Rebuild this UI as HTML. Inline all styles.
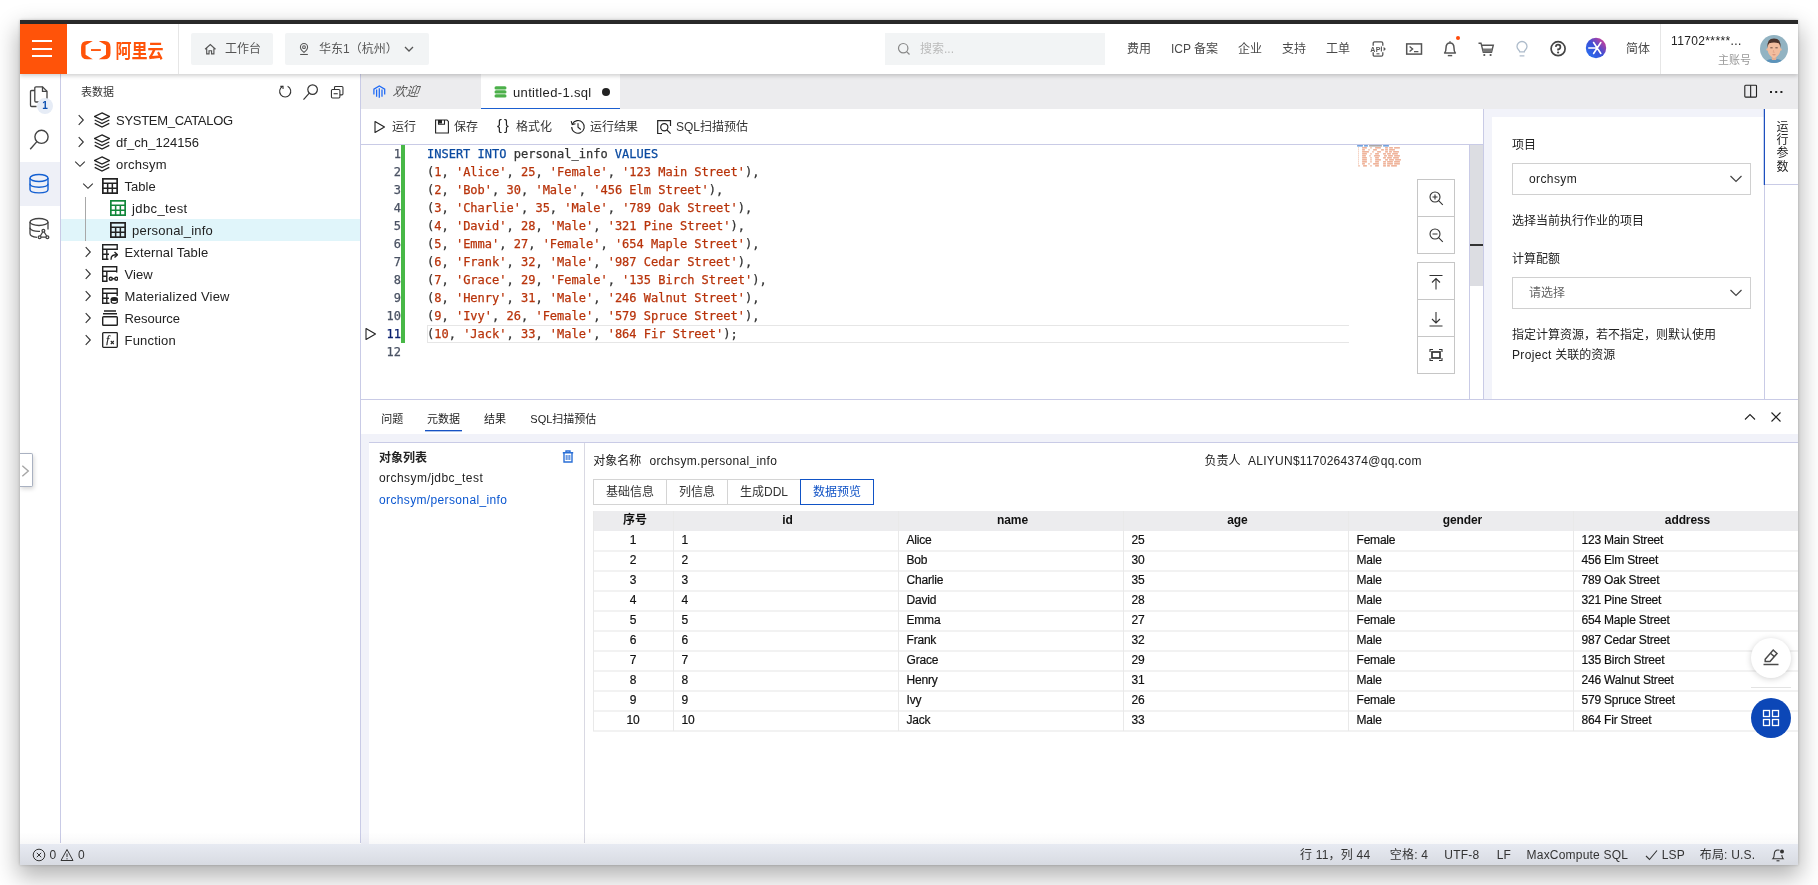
<!DOCTYPE html>
<html lang="zh-CN">
<head>
<meta charset="utf-8">
<title>MaxCompute SQL</title>
<style>
*{box-sizing:border-box;margin:0;padding:0}
html,body{width:1818px;height:885px;overflow:hidden;background:#fff}
body{font-family:"Liberation Sans","Noto Sans CJK SC",sans-serif;font-size:12px;color:#333;position:relative}
.abs{position:absolute}
#win{position:absolute;left:20px;top:20px;width:1778px;height:845px;background:#fff;box-shadow:0 10px 22px 2px rgba(0,0,0,.30),0 0 3px rgba(0,0,0,.22);overflow:hidden;will-change:transform}
#titlebar{left:0;top:0;width:1778px;height:4px;background:#2a2a2a}
/* top nav */
#nav{left:0;top:4px;width:1778px;height:50px;background:#fff;box-shadow:0 2px 4px rgba(0,0,0,.18);z-index:20}
#burger{left:0;top:0;width:47px;height:50px;background:#ff5309}
#burger i{position:absolute;left:12px;width:20px;height:2px;background:#fff}
.navbtn{position:absolute;top:9px;height:32px;background:#f2f4f5;border-radius:2px;color:#555;font-size:12px;line-height:32px}
.navtxt{position:absolute;top:0;height:50px;line-height:50px;font-size:12px;color:#4a4a4a;white-space:nowrap}
/* activity bar */
#act{left:0;top:54px;width:40px;height:769px;background:#fff}
#actline{left:40px;top:54px;width:1px;height:769px;background:#c9cbe6}
/* explorer */
#exp{left:41px;top:54px;width:299px;height:769px;background:#fff}
#expline{left:340px;top:54px;width:1px;height:769px;background:#c9cbe6}
.row{position:absolute;left:0;width:299px;height:22px;line-height:22px;font-size:13px;color:#222;white-space:nowrap}
.row span{position:absolute;top:0}
.row svg{position:absolute}
/* editor area */
#tabs{left:341px;top:54px;width:1437px;height:35px;background:#ececee}
#toolbar{left:341px;top:89px;width:1122px;height:36px;background:#fff;border-bottom:1px solid #c9cbe6}
.tb{position:absolute;top:1px;height:35px;line-height:35px;font-size:12px;color:#333;white-space:nowrap}
#editor{left:341px;top:125px;width:1122px;height:254px;background:#fff}
.ln{position:absolute;left:0;width:40px;text-align:right;height:18px;line-height:18px;font-family:"DejaVu Sans Mono","Liberation Mono",monospace;font-size:12px;color:#4a5263}
.cl{position:absolute;left:66px;height:18px;line-height:18px;font-family:"DejaVu Sans Mono","Liberation Mono",monospace;font-size:12px;color:#333;white-space:pre}
.k{color:#0a4aa0}.s{color:#b8330a}.n{color:#b8330a}
.cl,.ln{-webkit-text-stroke:.25px}
/* right params */
#rp{left:1463px;top:89px;width:281px;height:290px;background:#f2f3fa;border-left:1px solid #c9cbe6}
#rpcard{left:1472px;top:97px;width:272px;height:282px;background:#fff}
#rptab{left:1744px;top:89px;width:34px;height:290px;background:#fff;border-left:1px solid #c9cbe6}
/* bottom panel */
#bp{left:341px;top:379px;width:1437px;height:445px;background:#fff;border-top:1px solid #c9cbe6}
#status{left:0;top:824px;width:1778px;height:21px;background:linear-gradient(#e7eaf2,#d8dbe2);font-size:12px;color:#333;line-height:21px;z-index:40}
#prefade{left:0;top:812px;width:1778px;height:12px;background:linear-gradient(rgba(0,0,0,0),rgba(60,60,80,.035));z-index:39}
#status span{position:absolute;top:1px;white-space:nowrap;letter-spacing:.2px}
.th{height:20px;line-height:19px;font-size:12px;font-weight:bold;color:#111;text-align:center;padding-left:4px;letter-spacing:-.1px}
.td{height:20px;line-height:18px;font-size:12px;color:#111;padding-left:8.500px;white-space:nowrap;letter-spacing:-.2px;-webkit-text-stroke:.2px}
</style>
</head>
<body>
<div id="win">
<div id="titlebar" class="abs"></div>
<!--NAV-->
<div id="nav" class="abs">
 <div id="burger" class="abs"><i style="top:16px"></i><i style="top:24px"></i><i style="top:31px"></i></div>
 <svg class="abs" style="left:56px;top:10px" width="94" height="32" viewBox="0 0 1818 619">
  <g fill="#ff5309">
   <path d="M325,133 L215,133 Q98,133 98,250 L98,370 Q98,487 215,487 L325,487 L185,400 L185,220 Z"/>
   <path d="M440,133 L550,133 Q667,133 667,250 L667,370 Q667,487 550,487 L440,487 L580,400 L580,220 Z"/>
   <rect x="290" y="292" width="190" height="36"/>
   <text x="762" y="470" font-family="'Liberation Sans','Noto Sans CJK SC',sans-serif" font-weight="bold" font-size="365" textLength="930" lengthAdjust="spacingAndGlyphs">阿里云</text>
  </g>
 </svg>
 <div class="abs" style="left:158px;top:0;width:1px;height:50px;background:#e6e6e6"></div>
 <div class="navbtn" style="left:171px;width:82px">
  <svg class="abs" style="left:12.500px;top:10px" width="12.600" height="12.600" viewBox="0 0 14 14" fill="none" stroke="#555" stroke-width="1.3"><path d="M1.2,7 L7,1.8 L12.8,7 M3,6 V12 H5.6 V8.6 H8.4 V12 H11 V6"/></svg>
  <span class="abs" style="left:34px;top:0">工作台</span>
 </div>
 <div class="navbtn" style="left:265px;width:144px">
  <svg class="abs" style="left:13px;top:9px" width="12" height="13.700" viewBox="0 0 14 16" fill="none" stroke="#555" stroke-width="1.25"><path d="M7,12.2 C4,9.6 2.8,7.8 2.8,6 A4.2,4.2 0 0 1 11.200,6 C11.2,7.800 10,9.600 7,12.2 Z"/><circle cx="7" cy="6" r="1.600"/><path d="M2.5,14.600 H11.5"/></svg>
  <span class="abs" style="left:34px;top:0">华东1（杭州）</span>
  <svg class="abs" style="left:119px;top:12px" width="10" height="8" viewBox="0 0 10 8" fill="none" stroke="#555" stroke-width="1.3"><path d="M1,2 L5,6 L9,2"/></svg>
 </div>
 <div class="abs" style="left:865px;top:9px;width:220px;height:32px;background:#f2f4f5">
  <svg class="abs" style="left:12px;top:9px" width="14" height="14" viewBox="0 0 14 14" fill="none" stroke="#888" stroke-width="1.2"><circle cx="6.2" cy="6.2" r="4.700"/><path d="M9.600,9.600 L12.5,12.5"/></svg>
  <span class="abs" style="left:35px;top:0;line-height:32px;color:#bbb;font-size:12px">搜索...</span>
 </div>
 <span class="navtxt" style="left:1107px">费用</span>
 <span class="navtxt" style="left:1151px">ICP 备案</span>
 <span class="navtxt" style="left:1218px">企业</span>
 <span class="navtxt" style="left:1262px">支持</span>
 <span class="navtxt" style="left:1306px">工单</span>
 <!-- API icon -->
 <svg class="abs" style="left:1349px;top:16px" width="18" height="18" viewBox="0 0 18 18" fill="none" stroke="#555" stroke-width="1.300"><path d="M4.200,5.800 V3.300 Q4.200,1.800 5.700,1.800 H12.300 Q13.800,1.800 13.800,3.300 V5.800 M13.800,12.200 V14.700 Q13.800,16.200 12.300,16.200 H5.700 Q4.200,16.200 4.200,14.700 V12.200"/><path d="M7.500,13.800 H10.500" stroke-width="1.100"/><text x="1.300" y="11.600" font-family="'Liberation Sans',sans-serif" font-size="7" font-weight="bold" fill="#555" stroke="none" letter-spacing="0.300">AP</text><path d="M12.400,6.400 V11.600" stroke-width="1.100"/><path d="M14.600,6.800 L16.900,9 L14.600,11.200 Z" fill="#555" stroke="none"/></svg>
 <!-- terminal -->
 <svg class="abs" style="left:1385px;top:18px" width="18" height="14" viewBox="0 0 18 14" fill="none" stroke="#555" stroke-width="1.500"><rect x="1.700" y="1.900" width="14.800" height="10.200"/><path d="M4.600,4.500 L7.600,7 L4.600,9.500 M9,9.600 H13.400" stroke-width="1.400"/></svg>
 <!-- bell -->
 <svg class="abs" style="left:1421px;top:16px" width="18" height="18" viewBox="0 0 18 18" fill="none" stroke="#555" stroke-width="1.500"><path d="M9,1.200 V2.800"/><path d="M3.600,13 H14.400 C13.200,11.800 13,10.500 13,8 C13,4.700 11.300,3 9,3 C6.700,3 5,4.700 5,8 C5,10.500 4.800,11.800 3.600,13 Z" stroke-linejoin="round"/><path d="M6.800,15.600 H11.200" stroke-width="1.400"/></svg>
 <div class="abs" style="left:1436px;top:12px;width:4px;height:4px;border-radius:50%;background:#ff4a0a"></div>
 <!-- cart -->
 <svg class="abs" style="left:1457px;top:17px" width="18" height="16" viewBox="0 0 18 16" fill="none" stroke="#555" stroke-width="1.400"><path d="M1.500,2.200 H4 L6.300,11.300 H14.500 L16.300,4.200 H4.600"/><path d="M5.700,7.600 H15.300 L14.500,11.300 H6.500 Z" fill="#777" stroke="none"/><circle cx="7.300" cy="14" r="1.100" fill="#555" stroke="none"/><circle cx="13.600" cy="14" r="1.100" fill="#555" stroke="none"/></svg>
 <!-- bulb -->
 <svg class="abs" style="left:1493px;top:16px" width="18" height="18" viewBox="0 0 18 18" fill="none" stroke="#aebccb" stroke-width="1.300"><path d="M6.700,11.800 C6.700,10.300 4,9.400 4,6.500 A5,5 0 0 1 14,6.500 C14,9.400 11.300,10.300 11.300,11.800 Z M6.600,15.800 H11.400"/></svg>
 <!-- help -->
 <svg class="abs" style="left:1528px;top:15px" width="20" height="20" viewBox="0 0 20 20" fill="none" stroke="#444" stroke-width="1.700"><circle cx="10.100" cy="9.700" r="7"/><path d="M7.800,7.900 A2.300,2.300 0 1 1 10.100,10.300 V11.400" stroke-width="1.700"/><circle cx="10.100" cy="13.500" r="1.100" fill="#444" stroke="none"/></svg>
 <!-- colorful -->
 <svg class="abs" style="left:1565px;top:13px" width="22" height="22" viewBox="0 0 22 22"><defs><linearGradient id="gcol" x1="0.100" y1="0.900" x2="0.900" y2="0.100"><stop offset="0" stop-color="#2a6ff0"/><stop offset=".5" stop-color="#3b4fd6"/><stop offset="1" stop-color="#d03c96"/></linearGradient></defs><circle cx="11" cy="11" r="10.200" fill="url(#gcol)"/><g stroke="#fff" stroke-width="1.600" stroke-linecap="round" fill="none"><path d="M3.800,11 H12 M8.600,5.500 L15.800,16.500 M15.800,5.500 L8.600,16.500"/></g></svg>
 <span class="navtxt" style="left:1606px">简体</span>
 <div class="abs" style="left:1640px;top:0;width:1px;height:50px;background:#e6e6e6"></div>
 <span class="abs" style="left:1651px;top:9px;font-size:12px;color:#222;line-height:16px;letter-spacing:.37px">11702*****...</span>
 <span class="abs" style="left:1698px;top:28.500px;font-size:11px;color:#999;line-height:15px">主账号</span>
 <!-- avatar -->
 <svg class="abs" style="left:1740px;top:11px" width="28" height="28" viewBox="0 0 28 28"><defs><clipPath id="avc"><circle cx="14" cy="14" r="14"/></clipPath></defs><g clip-path="url(#avc)"><rect width="28" height="28" fill="#92b3c2"/><path d="M5,28 Q6,24.500 11,24 L17,24 Q22,24.500 23,28 Z" fill="#5c93ba"/><rect x="11.800" y="20" width="4.400" height="5" fill="#e3ae92"/><circle cx="7.600" cy="14.500" r="1.300" fill="#eeb798"/><circle cx="20.400" cy="14.500" r="1.300" fill="#eeb798"/><path d="M7.600,12 Q7.600,5 14,5 Q20.400,5 20.400,12 L20.200,16 Q19.800,20.500 14,23.300 Q8.200,20.500 7.800,16 Z" fill="#f2bd9e"/><path d="M7.500,13 Q6.600,3.600 14,3.600 Q21.400,3.600 20.500,13 Q20,9.500 18.800,8.200 Q14,7 9.200,8.200 Q8,9.500 7.500,13 Z" fill="#4a332b"/><path d="M10.300,12.800 H12.600 M15.400,12.800 H17.700" stroke="#4a332b" stroke-width=".8" fill="none"/><path d="M13.600,15 L13.300,17.300 H14.700" stroke="#d99a80" stroke-width=".6" fill="none"/><path d="M12.600,19.600 Q14,20.200 15.400,19.600" stroke="#c0705f" stroke-width=".7" fill="none"/></g></svg>
</div>
<!--/NAV-->
<!--ACT-->
<svg width="0" height="0" style="position:absolute"><defs>
<symbol id="chevR" viewBox="0 0 16 16"><path d="M5.700,3.200 L10.300,8 L5.700,12.800" fill="none" stroke="#333" stroke-width="1.100"/></symbol>
<symbol id="chevD" viewBox="0 0 16 16"><path d="M3.200,5.700 L8,10.300 L12.800,5.700" fill="none" stroke="#333" stroke-width="1.100"/></symbol>
<symbol id="layers" viewBox="0 0 16 16"><g fill="none" stroke="#222" stroke-width="1.300" stroke-linejoin="miter"><path d="M8,0.900 L15.300,4.500 L8,8.100 L0.700,4.500 Z"/><path d="M0.700,8 L8,11.600 L15.300,8"/><path d="M0.700,11.400 L8,15 L15.300,11.400"/></g></symbol>
<symbol id="tbl" viewBox="0 0 16 16"><g fill="none" stroke="currentColor"><rect x="0.850" y="0.850" width="14.300" height="14.300" stroke-width="1.700"/><path d="M0.800,5.300 H15.200 M0.800,10.200 H15.200 M5.650,5.300 V15.200 M10.350,5.300 V15.200" stroke-width="1.500"/></g></symbol>
<symbol id="ext" viewBox="0 0 16 16"><g fill="none" stroke="#222" stroke-width="1.400"><path d="M15.200,6 V0.700 H0.700 V15.300 H6.500"/><path d="M0.700,5.300 H15.200 M0.700,10.300 H7 M4.800,5.300 V15.300"/><path d="M9,15.800 C9,11.500 11,10.800 15,10.800"/><path d="M12.500,8 L15.500,10.800 L12.500,13.600" /></g></symbol>
<symbol id="view" viewBox="0 0 16 16"><g fill="none" stroke="#222" stroke-width="1.400"><path d="M14.700,6.500 V0.700 H0.700 V15.300 H5.500"/><path d="M0.700,5.300 H14.700 M0.700,10.300 H5.500 M4.800,5.300 V15.300"/><circle cx="8.800" cy="12.700" r="1.500"/><circle cx="14.300" cy="12.700" r="1.500"/><path d="M10.300,12.700 H12.800"/></g></symbol>
<symbol id="mview" viewBox="0 0 16 16"><g fill="none" stroke="#222" stroke-width="1.400"><path d="M15.200,8 V0.700 H0.700 V15.300 H7.500"/><path d="M0.700,5.300 H15.200 M0.700,10.300 H7 M4.800,5.300 V15.300"/><ellipse cx="12.300" cy="11" rx="3" ry="1.400" fill="#222"/><path d="M9.300,11 V13.800 C9.300,15.800 15.300,15.800 15.300,13.800 V11" stroke-width="1.300"/></g></symbol>
<symbol id="res" viewBox="0 0 16 16"><g fill="none" stroke="#222" stroke-width="1.400"><path d="M2,1 H14 M1,3.800 H15"/><rect x="0.700" y="6.700" width="14.600" height="8.600" rx="0.800"/></g></symbol>
<symbol id="fn" viewBox="0 0 16 16"><rect x="0.700" y="0.700" width="14.600" height="14.600" rx="0.800" fill="none" stroke="#222" stroke-width="1.300"/><text x="4.200" y="11" font-family="'Liberation Serif',serif" font-style="italic" font-size="10.500" fill="#222" stroke="#222" stroke-width=".25">f</text><path d="M8.800,9 L11.800,12 M11.800,9 L8.800,12" stroke="#222" stroke-width="1.100" fill="none"/></symbol>
</defs></svg>
<div id="act" class="abs">
 <div class="abs" style="left:0;top:88px;width:40px;height:44px;background:#eef0f7"></div>
 <svg class="abs" style="left:8px;top:11px" width="24" height="24" viewBox="0 0 24 24" fill="none" stroke="#444" stroke-width="1.300"><path d="M6.800,5.500 V3 Q6.800,1.800 8,1.800 H14.500 L19,6.300 V15.800 Q19,17 17.800,17 H8 Q6.800,17 6.800,15.800 V5.500 H3.700 Q2.500,5.500 2.500,6.700 V20.300 Q2.500,21.500 3.700,21.500 H8.500"/><path d="M14.500,1.800 V6.300 H19"/></svg>
 <div class="abs" style="left:17px;top:24px;width:16px;height:16px;border-radius:50%;background:#e6ecf6;color:#0b4fb0;font-size:10px;font-weight:bold;line-height:16px;text-align:center">1</div>
 <svg class="abs" style="left:8px;top:53px" width="24" height="24" viewBox="0 0 24 24" fill="none" stroke="#444" stroke-width="1.400"><circle cx="13.500" cy="9.800" r="6.600"/><path d="M8.900,14.600 L2.200,22.200"/></svg>
 <svg class="abs" style="left:7.800px;top:98.600px" width="22" height="22" viewBox="0 0 22 22" fill="none" stroke="#1460d2" stroke-width="1.400"><ellipse cx="11" cy="5" rx="9" ry="3.500"/><path d="M2,5 V16.500 C2,21 20,21 20,16.500 V5"/><path d="M2,10.800 C2,15.300 20,15.300 20,10.800"/></svg>
 <svg class="abs" style="left:7.800px;top:142.600px" width="22" height="23" viewBox="0 0 22 23" fill="none" stroke="#444" stroke-width="1.300"><ellipse cx="11" cy="5" rx="9" ry="3.500"/><path d="M2,5 V16.500 C2,19 5.500,20 9,20.300 M20,5 V12.500"/><path d="M2,10.800 C2,13.500 7,14.600 12,14.300"/><circle cx="15.400" cy="13.800" r="1.400"/><circle cx="11.600" cy="20.200" r="1.400"/><circle cx="19.400" cy="20.200" r="1.400"/><path d="M14.700,15 L12.300,19 M16.100,15 L18.700,19 M13,20.200 H18"/></svg>
</div>
<div id="actline" class="abs"></div>
<div id="exp" class="abs">
<span class="abs" style="left:20px;top:1px;line-height:35px;font-size:11px;color:#333">表数据</span>
<svg class="abs" style="left:217px;top:10px" width="14.400" height="14.400" viewBox="0 0 16 16" fill="none" stroke="#333" stroke-width="1.200"><path d="M5.300,2.600 A6.200,6.200 0 1 0 10.700,2.600"/><path d="M2.600,2.600 H5.600 V5.600" /></svg>
<svg class="abs" style="left:241px;top:9px" width="18" height="18" viewBox="0 0 18 18" fill="none" stroke="#333" stroke-width="1.200"><circle cx="10.600" cy="6.600" r="4.800"/><path d="M7.300,10.100 L1.500,16.600"/></svg>
<svg class="abs" style="left:269px;top:10.500px" width="14.400" height="14.400" viewBox="0 0 16 16" fill="none" stroke="#333" stroke-width="1.200"><rect x="1.600" y="5" width="9.400" height="9.400" rx="1.200"/><path d="M5,5 V2.800 Q5,1.600 6.200,1.600 H13.200 Q14.400,1.600 14.400,2.800 V9.800 Q14.400,11 13.200,11 H11"/><path d="M4,9.700 H8.600"/></svg>
<div class="row" style="top:35px">
<svg style="left:11.5px;top:3px" width="16" height="16"><use href="#chevR"/></svg>
<svg style="left:33px;top:3px;color:#222" width="16" height="16"><use href="#layers"/></svg>
<span style="left:55px;top:1px;letter-spacing:-0.29px">SYSTEM_CATALOG</span></div>
<div class="row" style="top:57px">
<svg style="left:11.5px;top:3px" width="16" height="16"><use href="#chevR"/></svg>
<svg style="left:33px;top:3px;color:#222" width="16" height="16"><use href="#layers"/></svg>
<span style="left:55px;top:1px;letter-spacing:0.06px">df_ch_124156</span></div>
<div class="row" style="top:79px">
<svg style="left:11.0px;top:3px" width="16" height="16"><use href="#chevD"/></svg>
<svg style="left:33px;top:3px;color:#222" width="16" height="16"><use href="#layers"/></svg>
<span style="left:55px;top:1px;letter-spacing:0.25px">orchsym</span></div>
<div class="row" style="top:101px">
<svg style="left:18.5px;top:3px" width="16" height="16"><use href="#chevD"/></svg>
<svg style="left:41px;top:3px;color:#222" width="16" height="16"><use href="#tbl"/></svg>
<span style="left:63.5px;top:1px;letter-spacing:0.02px">Table</span></div>
<div class="row" style="top:123px">
<svg style="left:49px;top:3px;color:#12873a" width="16" height="16"><use href="#tbl"/></svg>
<span style="left:71px;top:1px;letter-spacing:0.39px">jdbc_test</span></div>
<div class="row" style="top:145px;background:#e0f5fa">
<svg style="left:49px;top:3px;color:#222" width="16" height="16"><use href="#tbl"/></svg>
<span style="left:71px;top:1px;letter-spacing:0.23px">personal_info</span></div>
<div class="row" style="top:167px">
<svg style="left:19.0px;top:3px" width="16" height="16"><use href="#chevR"/></svg>
<svg style="left:41px;top:3px;color:#222" width="16" height="16"><use href="#ext"/></svg>
<span style="left:63.5px;top:1px;letter-spacing:0.12px">External Table</span></div>
<div class="row" style="top:189px">
<svg style="left:19.0px;top:3px" width="16" height="16"><use href="#chevR"/></svg>
<svg style="left:41px;top:3px;color:#222" width="16" height="16"><use href="#view"/></svg>
<span style="left:63.5px;top:1px;letter-spacing:0.04px">View</span></div>
<div class="row" style="top:211px">
<svg style="left:19.0px;top:3px" width="16" height="16"><use href="#chevR"/></svg>
<svg style="left:41px;top:3px;color:#222" width="16" height="16"><use href="#mview"/></svg>
<span style="left:63.5px;top:1px;letter-spacing:0.21px">Materialized View</span></div>
<div class="row" style="top:233px">
<svg style="left:19.0px;top:3px" width="16" height="16"><use href="#chevR"/></svg>
<svg style="left:41px;top:3px;color:#222" width="16" height="16"><use href="#res"/></svg>
<span style="left:63.5px;top:1px;letter-spacing:-0.03px">Resource</span></div>
<div class="row" style="top:255px">
<svg style="left:19.0px;top:3px" width="16" height="16"><use href="#chevR"/></svg>
<svg style="left:41px;top:3px;color:#222" width="16" height="16"><use href="#fn"/></svg>
<span style="left:63.5px;top:1px;letter-spacing:0.2px">Function</span></div>
<div class="abs" style="left:24px;top:123px;width:1px;height:44px;background:#a8a8a8"></div>
</div><div id="expline" class="abs"></div>
<div class="abs" style="left:0;top:433px;width:13px;height:34px;background:#fff;border:1px solid #a9b1c1;border-left:none;border-radius:0 2px 2px 0;box-shadow:1px 2px 4px rgba(0,0,0,.16);z-index:5"><svg class="abs" style="left:0;top:10px" width="12" height="14" viewBox="0 0 12 14" fill="none" stroke="#a6a6a6" stroke-width="1.400"><path d="M2.300,1.700 L8.300,7 L2.300,12.300"/></svg></div>
<!--/ACT-->
<!--EXP-->
<!--TABS-->
<div id="tabs" class="abs">
<div class="abs" style="left:120px;top:0;width:139px;height:35px;background:#fff;border-bottom:1px solid #1b5fd0"></div>
<svg class="abs" style="left:12px;top:10.500px" width="12.600" height="13.500" viewBox="0 0 14 15" fill="none" stroke="#1f6af5" stroke-width="1.400"><path d="M1,10.500 V4.600 L7,1 L13,4.600 V10.500"/><path d="M4,13 V5 M7,14.300 V3.600 M10,13 V5"/></svg>
<span class="abs" style="left:32px;top:0;line-height:36px;font-size:13px;font-style:italic;color:#5a5a5a;transform:skewX(-6deg)">欢迎</span>
<svg class="abs" style="left:133px;top:12px" width="13" height="12" viewBox="0 0 13 12" fill="#4cb04a"><rect x="0.500" y="0.300" width="12" height="3.300" rx="1.600"/><rect x="0.500" y="4.300" width="12" height="3.300" rx="1.600"/><rect x="0.500" y="8.300" width="12" height="3.300" rx="1.600"/></svg>
<span class="abs" style="left:152px;top:0;line-height:37px;font-size:13px;color:#222;letter-spacing:.35px">untitled-1.sql</span>
<div class="abs" style="left:241px;top:14px;width:8px;height:8px;border-radius:50%;background:#222"></div>
<svg class="abs" style="left:1383px;top:10px" width="14" height="14" viewBox="0 0 14 14" fill="none" stroke="#222" stroke-width="1.100"><rect x="0.800" y="1.300" width="11.700" height="11.800" rx="0.800"/><path d="M6.650,1.300 V13.100"/></svg>
<div class="abs" style="left:1409px;top:17px;width:2px;height:2px;background:#222;box-shadow:5.200px 0 0 #222,10.400px 0 0 #222"></div>
</div>
<div id="toolbar" class="abs">
<svg class="abs" style="left:12px;top:11px" width="13" height="14" viewBox="0 0 13 14" fill="none" stroke="#222" stroke-width="1.100" stroke-linejoin="round"><path d="M2,1.500 L11.500,7 L2,12.500 Z"/></svg>
<span class="tb" style="left:31px">运行</span>
<svg class="abs" style="left:73px;top:10px" width="16" height="15" viewBox="0 0 16 15" fill="none" stroke="#222" stroke-width="1.100"><path d="M1.600,1 H13 L14.400,2.400 V14 H1.600 Z"/><path d="M4.500,1 V5.200 H10.500 V1" /><rect x="5" y="1" width="3" height="3.500" fill="#222" stroke="none"/></svg>
<span class="tb" style="left:93px">保存</span>
<span class="tb" style="left:136px;font-size:14.500px;letter-spacing:2.200px;top:-1px;color:#222">{}</span>
<span class="tb" style="left:155px">格式化</span>
<svg class="abs" style="left:209px;top:10px" width="16" height="16" viewBox="0 0 16 16" fill="none" stroke="#222" stroke-width="1.100"><path d="M2.300,5.200 A6.300,6.300 0 1 1 1.700,8"/><path d="M1.200,2.200 L2.200,5.500 L5.500,4.800"/><path d="M8,4.300 V8.300 L10.800,10.500"/></svg>
<span class="tb" style="left:229px">运行结果</span>
<svg class="abs" style="left:295px;top:10px" width="16" height="16" viewBox="0 0 16 16" fill="none" stroke="#222" stroke-width="1.200"><path d="M14.500,7 V1.700 H1.700 V14.500 H6"/><circle cx="8.300" cy="8.300" r="3.600"/><path d="M10.900,10.900 L14.600,14.600"/></svg>
<span class="tb" style="left:315px">SQL扫描预估</span>
</div>
<div id="editor" class="abs">
<div class="abs" style="left:40px;top:0;width:4px;height:198px;background:#48b847"></div>
<div class="abs" style="left:66px;top:180px;width:922px;height:18px;border:1px solid #e6e6e6;border-right:none"></div>
<svg class="abs" style="left:3px;top:182px" width="13" height="14" viewBox="0 0 13 14" fill="none" stroke="#222" stroke-width="1.100" stroke-linejoin="round"><path d="M2,1.500 L11.500,7 L2,12.500 Z"/></svg>
<div class="ln" style="top:0px">1</div>
<div class="cl" style="top:0px"><span class=k>INSERT INTO</span> personal_info <span class=k>VALUES</span></div>
<div class="ln" style="top:18px">2</div>
<div class="cl" style="top:18px">(<span class=n>1</span>, <span class=s>'Alice'</span>, <span class=n>25</span>, <span class=s>'Female'</span>, <span class=s>'123 Main Street'</span>),</div>
<div class="ln" style="top:36px">3</div>
<div class="cl" style="top:36px">(<span class=n>2</span>, <span class=s>'Bob'</span>, <span class=n>30</span>, <span class=s>'Male'</span>, <span class=s>'456 Elm Street'</span>),</div>
<div class="ln" style="top:54px">4</div>
<div class="cl" style="top:54px">(<span class=n>3</span>, <span class=s>'Charlie'</span>, <span class=n>35</span>, <span class=s>'Male'</span>, <span class=s>'789 Oak Street'</span>),</div>
<div class="ln" style="top:72px">5</div>
<div class="cl" style="top:72px">(<span class=n>4</span>, <span class=s>'David'</span>, <span class=n>28</span>, <span class=s>'Male'</span>, <span class=s>'321 Pine Street'</span>),</div>
<div class="ln" style="top:90px">6</div>
<div class="cl" style="top:90px">(<span class=n>5</span>, <span class=s>'Emma'</span>, <span class=n>27</span>, <span class=s>'Female'</span>, <span class=s>'654 Maple Street'</span>),</div>
<div class="ln" style="top:108px">7</div>
<div class="cl" style="top:108px">(<span class=n>6</span>, <span class=s>'Frank'</span>, <span class=n>32</span>, <span class=s>'Male'</span>, <span class=s>'987 Cedar Street'</span>),</div>
<div class="ln" style="top:126px">8</div>
<div class="cl" style="top:126px">(<span class=n>7</span>, <span class=s>'Grace'</span>, <span class=n>29</span>, <span class=s>'Female'</span>, <span class=s>'135 Birch Street'</span>),</div>
<div class="ln" style="top:144px">9</div>
<div class="cl" style="top:144px">(<span class=n>8</span>, <span class=s>'Henry'</span>, <span class=n>31</span>, <span class=s>'Male'</span>, <span class=s>'246 Walnut Street'</span>),</div>
<div class="ln" style="top:162px">10</div>
<div class="cl" style="top:162px">(<span class=n>9</span>, <span class=s>'Ivy'</span>, <span class=n>26</span>, <span class=s>'Female'</span>, <span class=s>'579 Spruce Street'</span>),</div>
<div class="ln" style="top:180px;color:#0b216f">11</div>
<div class="cl" style="top:180px">(<span class=n>10</span>, <span class=s>'Jack'</span>, <span class=n>33</span>, <span class=s>'Male'</span>, <span class=s>'864 Fir Street'</span>);</div>
<div class="ln" style="top:198px">12</div>
<svg class="abs" style="left:996px;top:0" width="48" height="24" viewBox="0 0 48 24"><rect x="0.1" y="0.2" width="5.8" height="1.3" fill="#3f7fd0" opacity="0.9"/><rect x="7.1" y="0.2" width="3.8" height="1.3" fill="#3f7fd0" opacity="0.9"/><rect x="12.1" y="0.2" width="12.8" height="1.3" fill="#8a8a8a" opacity="0.9"/><rect x="26.1" y="0.2" width="5.8" height="1.3" fill="#3f7fd0" opacity="0.9"/><rect x="1.1" y="2.2" width="0.8" height="1.3" fill="#e8926d" opacity="0.6"/><rect x="5.1" y="2.2" width="4.8" height="1.3" fill="#e8926d" opacity="0.85"/><rect x="13.1" y="2.2" width="1.8" height="1.3" fill="#e8926d" opacity="0.6"/><rect x="18.1" y="2.2" width="5.8" height="1.3" fill="#e8926d" opacity="0.85"/><rect x="28.1" y="2.2" width="2.8" height="1.3" fill="#e8926d" opacity="0.85"/><rect x="32.1" y="2.2" width="3.8" height="1.3" fill="#e8926d" opacity="0.85"/><rect x="37.1" y="2.2" width="5.8" height="1.3" fill="#e8926d" opacity="0.85"/><rect x="1.1" y="4.2" width="0.8" height="1.3" fill="#e8926d" opacity="0.6"/><rect x="5.1" y="4.2" width="2.8" height="1.3" fill="#e8926d" opacity="0.85"/><rect x="11.1" y="4.2" width="1.8" height="1.3" fill="#e8926d" opacity="0.6"/><rect x="16.1" y="4.2" width="3.8" height="1.3" fill="#e8926d" opacity="0.85"/><rect x="24.1" y="4.2" width="2.8" height="1.3" fill="#e8926d" opacity="0.85"/><rect x="28.1" y="4.2" width="2.8" height="1.3" fill="#e8926d" opacity="0.85"/><rect x="32.1" y="4.2" width="5.8" height="1.3" fill="#e8926d" opacity="0.85"/><rect x="1.1" y="6.2" width="0.8" height="1.3" fill="#e8926d" opacity="0.6"/><rect x="5.1" y="6.2" width="6.8" height="1.3" fill="#e8926d" opacity="0.85"/><rect x="15.1" y="6.2" width="1.8" height="1.3" fill="#e8926d" opacity="0.6"/><rect x="20.1" y="6.2" width="3.8" height="1.3" fill="#e8926d" opacity="0.85"/><rect x="28.1" y="6.2" width="2.8" height="1.3" fill="#e8926d" opacity="0.85"/><rect x="32.1" y="6.2" width="2.8" height="1.3" fill="#e8926d" opacity="0.85"/><rect x="36.1" y="6.2" width="5.8" height="1.3" fill="#e8926d" opacity="0.85"/><rect x="1.1" y="8.2" width="0.8" height="1.3" fill="#e8926d" opacity="0.6"/><rect x="5.1" y="8.2" width="4.8" height="1.3" fill="#e8926d" opacity="0.85"/><rect x="13.1" y="8.2" width="1.8" height="1.3" fill="#e8926d" opacity="0.6"/><rect x="18.1" y="8.2" width="3.8" height="1.3" fill="#e8926d" opacity="0.85"/><rect x="26.1" y="8.2" width="2.8" height="1.3" fill="#e8926d" opacity="0.85"/><rect x="30.1" y="8.2" width="3.8" height="1.3" fill="#e8926d" opacity="0.85"/><rect x="35.1" y="8.2" width="5.8" height="1.3" fill="#e8926d" opacity="0.85"/><rect x="1.1" y="10.2" width="0.8" height="1.3" fill="#e8926d" opacity="0.6"/><rect x="5.1" y="10.2" width="3.8" height="1.3" fill="#e8926d" opacity="0.85"/><rect x="12.1" y="10.2" width="1.8" height="1.3" fill="#e8926d" opacity="0.6"/><rect x="17.1" y="10.2" width="5.8" height="1.3" fill="#e8926d" opacity="0.85"/><rect x="27.1" y="10.2" width="2.8" height="1.3" fill="#e8926d" opacity="0.85"/><rect x="31.1" y="10.2" width="4.8" height="1.3" fill="#e8926d" opacity="0.85"/><rect x="37.1" y="10.2" width="5.8" height="1.3" fill="#e8926d" opacity="0.85"/><rect x="1.1" y="12.2" width="0.8" height="1.3" fill="#e8926d" opacity="0.6"/><rect x="5.1" y="12.2" width="4.8" height="1.3" fill="#e8926d" opacity="0.85"/><rect x="13.1" y="12.2" width="1.8" height="1.3" fill="#e8926d" opacity="0.6"/><rect x="18.1" y="12.2" width="3.8" height="1.3" fill="#e8926d" opacity="0.85"/><rect x="26.1" y="12.2" width="2.8" height="1.3" fill="#e8926d" opacity="0.85"/><rect x="30.1" y="12.2" width="4.8" height="1.3" fill="#e8926d" opacity="0.85"/><rect x="36.1" y="12.2" width="5.8" height="1.3" fill="#e8926d" opacity="0.85"/><rect x="1.1" y="14.2" width="0.8" height="1.3" fill="#e8926d" opacity="0.6"/><rect x="5.1" y="14.2" width="4.8" height="1.3" fill="#e8926d" opacity="0.85"/><rect x="13.1" y="14.2" width="1.8" height="1.3" fill="#e8926d" opacity="0.6"/><rect x="18.1" y="14.2" width="5.8" height="1.3" fill="#e8926d" opacity="0.85"/><rect x="28.1" y="14.2" width="2.8" height="1.3" fill="#e8926d" opacity="0.85"/><rect x="32.1" y="14.2" width="4.8" height="1.3" fill="#e8926d" opacity="0.85"/><rect x="38.1" y="14.2" width="5.8" height="1.3" fill="#e8926d" opacity="0.85"/><rect x="1.1" y="16.2" width="0.8" height="1.3" fill="#e8926d" opacity="0.6"/><rect x="5.1" y="16.2" width="4.8" height="1.3" fill="#e8926d" opacity="0.85"/><rect x="13.1" y="16.2" width="1.8" height="1.3" fill="#e8926d" opacity="0.6"/><rect x="18.1" y="16.2" width="3.8" height="1.3" fill="#e8926d" opacity="0.85"/><rect x="26.1" y="16.2" width="2.8" height="1.3" fill="#e8926d" opacity="0.85"/><rect x="30.1" y="16.2" width="5.8" height="1.3" fill="#e8926d" opacity="0.85"/><rect x="37.1" y="16.2" width="5.8" height="1.3" fill="#e8926d" opacity="0.85"/><rect x="1.1" y="18.2" width="0.8" height="1.3" fill="#e8926d" opacity="0.6"/><rect x="5.1" y="18.2" width="2.8" height="1.3" fill="#e8926d" opacity="0.85"/><rect x="11.1" y="18.2" width="1.8" height="1.3" fill="#e8926d" opacity="0.6"/><rect x="16.1" y="18.2" width="5.8" height="1.3" fill="#e8926d" opacity="0.85"/><rect x="26.1" y="18.2" width="2.8" height="1.3" fill="#e8926d" opacity="0.85"/><rect x="30.1" y="18.2" width="5.8" height="1.3" fill="#e8926d" opacity="0.85"/><rect x="37.1" y="18.2" width="5.8" height="1.3" fill="#e8926d" opacity="0.85"/><rect x="1.1" y="20.2" width="1.8" height="1.3" fill="#e8926d" opacity="0.6"/><rect x="6.1" y="20.2" width="3.8" height="1.3" fill="#e8926d" opacity="0.85"/><rect x="13.1" y="20.2" width="1.8" height="1.3" fill="#e8926d" opacity="0.6"/><rect x="18.1" y="20.2" width="3.8" height="1.3" fill="#e8926d" opacity="0.85"/><rect x="26.1" y="20.2" width="2.8" height="1.3" fill="#e8926d" opacity="0.85"/><rect x="30.1" y="20.2" width="2.8" height="1.3" fill="#e8926d" opacity="0.85"/><rect x="34.1" y="20.2" width="5.8" height="1.3" fill="#e8926d" opacity="0.85"/></svg>
<div class="abs" style="left:1056px;top:34px;width:38px;height:75px;border:1px solid #c6c6c6;background:#fff"></div><div class="abs" style="left:1056px;top:71px;width:38px;height:1px;background:#c6c6c6"></div>
<div class="abs" style="left:1056px;top:117px;width:38px;height:112px;border:1px solid #c6c6c6;background:#fff"></div><div class="abs" style="left:1056px;top:154px;width:38px;height:1px;background:#c6c6c6"></div><div class="abs" style="left:1056px;top:191px;width:38px;height:1px;background:#c6c6c6"></div>
<svg class="abs" style="left:1067px;top:45px" width="16" height="16" viewBox="0 0 16 16" fill="none" stroke="#333" stroke-width="1.100"><circle cx="7" cy="7" r="5"/><path d="M10.600,10.600 L14.800,14.800 M4.500,7 H9.500 M7,4.500 V9.500"/></svg>
<svg class="abs" style="left:1067px;top:82px" width="16" height="16" viewBox="0 0 16 16" fill="none" stroke="#333" stroke-width="1.100"><circle cx="7" cy="7" r="5"/><path d="M10.600,10.600 L14.800,14.800 M4.500,7 H9.500"/></svg>
<svg class="abs" style="left:1067px;top:129px" width="16" height="16" viewBox="0 0 16 16" fill="none" stroke="#333" stroke-width="1.100"><path d="M1.500,1.500 H14.500 M8,15.500 V4.500 M4,8.500 L8,4.500 L12,8.500"/></svg>
<svg class="abs" style="left:1067px;top:166px" width="16" height="16" viewBox="0 0 16 16" fill="none" stroke="#333" stroke-width="1.100"><path d="M1.500,15 H14.500 M8,1 V12 M4,8 L8,12 L12,8"/></svg>
<svg class="abs" style="left:1067px;top:202px" width="16" height="16" viewBox="0 0 16 16" fill="none" stroke="#333" stroke-width="1.100"><path d="M2,5 V2.500 H5 M11,2.500 H14 V5 M14,11 V13.500 H11 M5,13.500 H2 V11" /><rect x="4" y="5" width="8" height="6" stroke-width="1.700"/></svg>
<div class="abs" style="left:1108px;top:0;width:1px;height:254px;background:#c9cbe6"></div>
<div class="abs" style="left:1109px;top:0;width:13px;height:141px;background:#dcdde2"></div>
<div class="abs" style="left:1109px;top:99px;width:13px;height:2px;background:#333"></div>
</div>
<!--/TABS-->
<!--EDITOR-->
<!--RP-->
<div id="rp" class="abs"></div><div id="rpcard" class="abs">
<span class="abs" style="left:20px;top:19px;line-height:18px;font-size:12px;color:#222">项目</span>
<div class="abs" style="left:20px;top:46px;width:239px;height:32px;border:1px solid #d0d0d0;background:#fff"><span class="abs" style="left:16px;top:0;line-height:31px;font-size:12px;color:#222;letter-spacing:.4px">orchsym</span><svg class="abs" style="left:216px;top:10px" width="14" height="10" viewBox="0 0 14 10" fill="none" stroke="#444" stroke-width="1.200"><path d="M1.500,2 L7,7.500 L12.500,2"/></svg></div>
<span class="abs" style="left:20px;top:95px;line-height:18px;font-size:12px;color:#222">选择当前执行作业的项目</span>
<span class="abs" style="left:20px;top:132.5px;line-height:18px;font-size:12px;color:#222">计算配额</span>
<div class="abs" style="left:20px;top:160px;width:239px;height:32px;border:1px solid #d0d0d0;background:#fff"><span class="abs" style="left:16px;top:0;line-height:31px;font-size:12px;color:#666">请选择</span><svg class="abs" style="left:216px;top:10px" width="14" height="10" viewBox="0 0 14 10" fill="none" stroke="#444" stroke-width="1.200"><path d="M1.500,2 L7,7.500 L12.500,2"/></svg></div>
<span class="abs" style="left:20px;top:208px;line-height:20px;font-size:12px;color:#222;width:240px;white-space:nowrap">指定计算资源，若不指定，则默认使用<br><span style="letter-spacing:.35px">Project</span> 关联的资源</span>
</div>
<div id="rptab" class="abs"><div class="abs" style="left:-1px;top:0;width:1px;height:76px;background:#1d4fbf;box-shadow:-1px 0 0 rgba(29,79,191,.25)"></div><div class="abs" style="left:0;top:75px;width:35px;height:1px;background:#c9cbe6"></div>
<div class="abs" style="left:9px;top:11.400px;width:13px;height:60px;font-size:12px;line-height:13px;letter-spacing:1.450px;color:#222;writing-mode:vertical-rl;white-space:nowrap">运行参数</div></div>
<!--/RP-->
<!--BP-->
<div id="bp" class="abs">
<span class="abs" style="left:20.3px;top:9px;line-height:20px;font-size:11px;color:#222;white-space:nowrap">问题</span>
<span class="abs" style="left:66.0px;top:9px;line-height:20px;font-size:11px;color:#222;white-space:nowrap">元数据</span>
<span class="abs" style="left:123.0px;top:9px;line-height:20px;font-size:11px;color:#222;white-space:nowrap">结果</span>
<span class="abs" style="left:169.3px;top:9px;line-height:20px;font-size:11px;color:#222;white-space:nowrap">SQL扫描预估</span>
<div class="abs" style="left:64px;top:30px;width:37px;height:1px;background:#1552c4;box-shadow:0 1px 0 rgba(21,82,196,.35)"></div>
<svg class="abs" style="left:1383px;top:11px" width="12" height="12" viewBox="0 0 12 12" fill="none" stroke="#222" stroke-width="1.100"><path d="M1,8.500 L6,3.500 L11,8.500"/></svg>
<svg class="abs" style="left:1409px;top:11px" width="12" height="12" viewBox="0 0 12 12" fill="none" stroke="#222" stroke-width="1.100"><path d="M1.500,1.500 L10.500,10.500 M10.500,1.500 L1.500,10.500"/></svg>
<div class="abs" style="left:0;top:34px;width:1437px;height:410px;background:#f1f2f9"></div>
<div class="abs" style="left:8px;top:42px;width:1429px;height:402px;background:#fff;border-top:1px solid #c9cbe6"></div>
<div class="abs" style="left:223px;top:43px;width:1px;height:400px;background:#d9d9e3"></div>
<span class="abs" style="left:18px;top:48px;line-height:20px;font-size:12px;font-weight:bold;color:#222">对象列表</span>
<svg class="abs" style="left:201px;top:50px" width="12" height="13" viewBox="0 0 12 13" fill="none" stroke="#2a6fd6" stroke-width="1.400"><path d="M0.800,2.800 H11.200 M4,2.800 V1 H8 V2.800 M2,2.800 V12 H10 V2.800"/><path d="M4.200,5 V10 M6,5 V10 M7.800,5 V10" stroke-width="1"/></svg>
<span class="abs" style="left:18px;top:67.5px;line-height:20px;font-size:12px;color:#222;letter-spacing:.44px">orchsym/jdbc_test</span>
<span class="abs" style="left:18px;top:89.5px;line-height:20px;font-size:12px;color:#0b57d0;letter-spacing:.36px">orchsym/personal_info</span>
<span class="abs" style="left:232.3px;top:50.5px;line-height:20px;font-size:12px;color:#222;white-space:nowrap">对象名称</span>
<span class="abs" style="left:288.4px;top:50.5px;line-height:20px;font-size:12px;color:#222;white-space:nowrap;letter-spacing:.34px">orchsym.personal_info</span>
<span class="abs" style="left:843.4px;top:50.5px;line-height:20px;font-size:12px;color:#222;white-space:nowrap">负责人</span>
<span class="abs" style="left:887.0px;top:50.5px;line-height:20px;font-size:12px;color:#222;white-space:nowrap;letter-spacing:.26px">ALIYUN$1170264374@qq.com</span>
<div class="abs" style="left:232px;top:79px;width:74px;height:26px;border:1px solid #d4d4d4;color:#333;font-size:12px;line-height:24px;text-align:center;z-index:1;background:#fff">基础信息</div>
<div class="abs" style="left:305px;top:79px;width:62px;height:26px;border:1px solid #d4d4d4;color:#333;font-size:12px;line-height:24px;text-align:center;z-index:1;background:#fff">列信息</div>
<div class="abs" style="left:366px;top:79px;width:74px;height:26px;border:1px solid #d4d4d4;color:#333;font-size:12px;line-height:24px;text-align:center;z-index:1;background:#fff">生成DDL</div>
<div class="abs" style="left:439px;top:79px;width:74px;height:26px;border:1px solid #1153c6;color:#1153c6;font-size:12px;line-height:24px;text-align:center;z-index:2;background:#fff">数据预览</div>
<div class="abs" style="left:232px;top:111px;width:1205px;height:20px;background:#ececee"></div>
<div class="abs th" style="left:232px;top:111px;width:80px">序号</div>
<div class="abs th" style="left:312px;top:111px;width:225px">id</div>
<div class="abs th" style="left:537px;top:111px;width:225px">name</div>
<div class="abs th" style="left:762px;top:111px;width:225px">age</div>
<div class="abs th" style="left:987px;top:111px;width:225px">gender</div>
<div class="abs th" style="left:1212px;top:111px;width:225px">address</div>
<div class="abs" style="left:232px;top:150px;width:1205px;height:2px;background:#f2f2f2"></div>
<div class="abs td" style="left:232px;top:131px;width:80px;text-align:center;padding:0">1</div>
<div class="abs td" style="left:312px;top:131px;width:225px">1</div>
<div class="abs td" style="left:537px;top:131px;width:225px">Alice</div>
<div class="abs td" style="left:762px;top:131px;width:225px">25</div>
<div class="abs td" style="left:987px;top:131px;width:225px">Female</div>
<div class="abs td" style="left:1212px;top:131px;width:225px">123 Main Street</div>
<div class="abs" style="left:232px;top:170px;width:1205px;height:2px;background:#f2f2f2"></div>
<div class="abs td" style="left:232px;top:151px;width:80px;text-align:center;padding:0">2</div>
<div class="abs td" style="left:312px;top:151px;width:225px">2</div>
<div class="abs td" style="left:537px;top:151px;width:225px">Bob</div>
<div class="abs td" style="left:762px;top:151px;width:225px">30</div>
<div class="abs td" style="left:987px;top:151px;width:225px">Male</div>
<div class="abs td" style="left:1212px;top:151px;width:225px">456 Elm Street</div>
<div class="abs" style="left:232px;top:190px;width:1205px;height:2px;background:#f2f2f2"></div>
<div class="abs td" style="left:232px;top:171px;width:80px;text-align:center;padding:0">3</div>
<div class="abs td" style="left:312px;top:171px;width:225px">3</div>
<div class="abs td" style="left:537px;top:171px;width:225px">Charlie</div>
<div class="abs td" style="left:762px;top:171px;width:225px">35</div>
<div class="abs td" style="left:987px;top:171px;width:225px">Male</div>
<div class="abs td" style="left:1212px;top:171px;width:225px">789 Oak Street</div>
<div class="abs" style="left:232px;top:210px;width:1205px;height:2px;background:#f2f2f2"></div>
<div class="abs td" style="left:232px;top:191px;width:80px;text-align:center;padding:0">4</div>
<div class="abs td" style="left:312px;top:191px;width:225px">4</div>
<div class="abs td" style="left:537px;top:191px;width:225px">David</div>
<div class="abs td" style="left:762px;top:191px;width:225px">28</div>
<div class="abs td" style="left:987px;top:191px;width:225px">Male</div>
<div class="abs td" style="left:1212px;top:191px;width:225px">321 Pine Street</div>
<div class="abs" style="left:232px;top:230px;width:1205px;height:2px;background:#f2f2f2"></div>
<div class="abs td" style="left:232px;top:211px;width:80px;text-align:center;padding:0">5</div>
<div class="abs td" style="left:312px;top:211px;width:225px">5</div>
<div class="abs td" style="left:537px;top:211px;width:225px">Emma</div>
<div class="abs td" style="left:762px;top:211px;width:225px">27</div>
<div class="abs td" style="left:987px;top:211px;width:225px">Female</div>
<div class="abs td" style="left:1212px;top:211px;width:225px">654 Maple Street</div>
<div class="abs" style="left:232px;top:250px;width:1205px;height:2px;background:#f2f2f2"></div>
<div class="abs td" style="left:232px;top:231px;width:80px;text-align:center;padding:0">6</div>
<div class="abs td" style="left:312px;top:231px;width:225px">6</div>
<div class="abs td" style="left:537px;top:231px;width:225px">Frank</div>
<div class="abs td" style="left:762px;top:231px;width:225px">32</div>
<div class="abs td" style="left:987px;top:231px;width:225px">Male</div>
<div class="abs td" style="left:1212px;top:231px;width:225px">987 Cedar Street</div>
<div class="abs" style="left:232px;top:270px;width:1205px;height:2px;background:#f2f2f2"></div>
<div class="abs td" style="left:232px;top:251px;width:80px;text-align:center;padding:0">7</div>
<div class="abs td" style="left:312px;top:251px;width:225px">7</div>
<div class="abs td" style="left:537px;top:251px;width:225px">Grace</div>
<div class="abs td" style="left:762px;top:251px;width:225px">29</div>
<div class="abs td" style="left:987px;top:251px;width:225px">Female</div>
<div class="abs td" style="left:1212px;top:251px;width:225px">135 Birch Street</div>
<div class="abs" style="left:232px;top:290px;width:1205px;height:2px;background:#f2f2f2"></div>
<div class="abs td" style="left:232px;top:271px;width:80px;text-align:center;padding:0">8</div>
<div class="abs td" style="left:312px;top:271px;width:225px">8</div>
<div class="abs td" style="left:537px;top:271px;width:225px">Henry</div>
<div class="abs td" style="left:762px;top:271px;width:225px">31</div>
<div class="abs td" style="left:987px;top:271px;width:225px">Male</div>
<div class="abs td" style="left:1212px;top:271px;width:225px">246 Walnut Street</div>
<div class="abs" style="left:232px;top:310px;width:1205px;height:2px;background:#f2f2f2"></div>
<div class="abs td" style="left:232px;top:291px;width:80px;text-align:center;padding:0">9</div>
<div class="abs td" style="left:312px;top:291px;width:225px">9</div>
<div class="abs td" style="left:537px;top:291px;width:225px">Ivy</div>
<div class="abs td" style="left:762px;top:291px;width:225px">26</div>
<div class="abs td" style="left:987px;top:291px;width:225px">Female</div>
<div class="abs td" style="left:1212px;top:291px;width:225px">579 Spruce Street</div>
<div class="abs" style="left:232px;top:330px;width:1205px;height:2px;background:#f2f2f2"></div>
<div class="abs td" style="left:232px;top:311px;width:80px;text-align:center;padding:0">10</div>
<div class="abs td" style="left:312px;top:311px;width:225px">10</div>
<div class="abs td" style="left:537px;top:311px;width:225px">Jack</div>
<div class="abs td" style="left:762px;top:311px;width:225px">33</div>
<div class="abs td" style="left:987px;top:311px;width:225px">Male</div>
<div class="abs td" style="left:1212px;top:311px;width:225px">864 Fir Street</div>
<div class="abs" style="left:232px;top:111px;width:1px;height:220px;background:#e9e9e9"></div>
<div class="abs" style="left:312px;top:111px;width:1px;height:220px;background:#e9e9e9"></div>
<div class="abs" style="left:537px;top:111px;width:1px;height:220px;background:#e9e9e9"></div>
<div class="abs" style="left:762px;top:111px;width:1px;height:220px;background:#e9e9e9"></div>
<div class="abs" style="left:987px;top:111px;width:1px;height:220px;background:#e9e9e9"></div>
<div class="abs" style="left:1212px;top:111px;width:1px;height:220px;background:#e9e9e9"></div>
</div>
<div class="abs" style="left:1731px;top:618px;width:40px;height:40px;border-radius:50%;background:#fff;box-shadow:0 1px 6px rgba(0,0,0,.18);z-index:30"><svg class="abs" style="left:11px;top:10px" width="18" height="18" viewBox="0 0 18 18" fill="none" stroke="#4a4a4a" stroke-width="1.500"><path d="M1.500,16.500 H16.500"/><path d="M3.200,11.200 L11.200,2 L15,5.500 L8,13.500 H3.200 Z M8.500,5.200 L12.300,8.600"/></svg></div>
<div class="abs" style="left:1731px;top:667px;width:40px;height:1px;background:#e3e3e3;z-index:30"></div>
<div class="abs" style="left:1731px;top:678px;width:40px;height:40px;border-radius:50%;background:#0c47b7;z-index:30"><svg class="abs" style="left:11px;top:11px" width="18" height="18" viewBox="0 0 18 18" fill="none" stroke="#fff" stroke-width="1.300"><rect x="1.500" y="1.500" width="6" height="6"/><rect x="10.500" y="1.500" width="6" height="6"/><rect x="1.500" y="10.500" width="6" height="6"/><rect x="10.500" y="10.500" width="6" height="6"/></svg></div>
<!--/BP-->
<!--STATUS-->
<div id="prefade" class="abs"></div><div id="status" class="abs">
<svg class="abs" style="left:12px;top:4px" width="14" height="14" viewBox="0 0 14 14" fill="none" stroke="#333" stroke-width="1"><circle cx="7" cy="7" r="5.800"/><path d="M4.800,4.800 L9.200,9.200 M9.200,4.800 L4.800,9.200"/></svg>
<span style="left:29.500px">0</span>
<svg class="abs" style="left:40px;top:4px" width="14" height="14" viewBox="0 0 14 14" fill="none" stroke="#333" stroke-width="1"><path d="M7,1.500 L13,12.500 H1 Z" stroke-linejoin="round"/><path d="M7,5.500 V9 M7,10.200 V11.400"/></svg>
<span style="left:58px">0</span>
<span style="left:1280.0px">行 11，列 44</span>
<span style="left:1369.8px">空格: 4</span>
<span style="left:1424.3px">UTF-8</span>
<span style="left:1476.7px">LF</span>
<span style="left:1506.6px">MaxCompute SQL</span>
<span style="left:1641.7px">LSP</span>
<span style="left:1679.7px">布局: U.S.</span>
<svg class="abs" style="left:1625px;top:5px" width="13" height="12" viewBox="0 0 13 12" fill="none" stroke="#333" stroke-width="1.100"><path d="M1,7 L4.500,10.500 L12,1.500"/></svg>
<svg class="abs" style="left:1751px;top:4px" width="14" height="14" viewBox="0 0 14 14" fill="none" stroke="#333" stroke-width="1.100"><path d="M8.500,2.200 Q7.800,2 7,2 C4.500,2 3.300,3.800 3.300,6 C3.300,8.500 2.800,9.600 1.800,10.800 H12.200 C11.400,9.800 10.900,8.800 10.800,7"/><path d="M5.500,12.800 H8.500"/><circle cx="11" cy="3.500" r="2" fill="#333" stroke="none"/></svg>
</div>
<!--/STATUS-->
</div>
</body>
</html>
